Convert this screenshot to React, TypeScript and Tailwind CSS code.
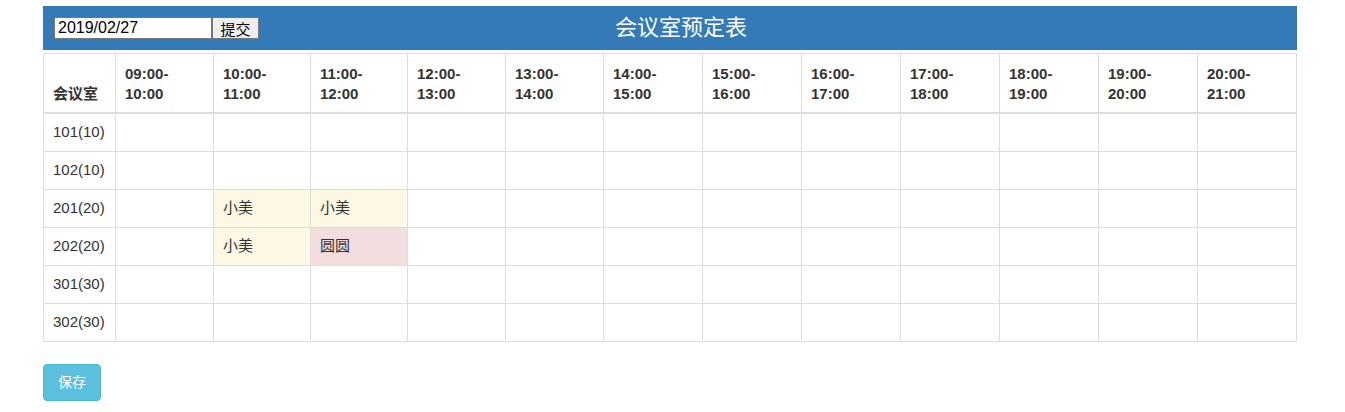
import React from 'react';

const hours = [
	'09:00-10:00',
	'10:00-11:00',
	'11:00-12:00',
	'12:00-13:00',
	'13:00-14:00',
	'14:00-15:00',
	'15:00-16:00',
	'16:00-17:00',
	'17:00-18:00',
	'18:00-19:00',
	'19:00-20:00',
	'20:00-21:00',
];

const colWidths = [
	'w-[98px]',
	'w-[97px]',
	'w-[97px]',
	'w-[98px]',
	'w-[98px]',
	'w-[99px]',
	'w-[99px]',
	'w-[99px]',
	'w-[99px]',
	'w-[99px]',
	'w-[99px]',
	'w-[99px]',
];

const rooms = ['101(10)', '102(10)', '201(20)', '202(20)', '301(30)', '302(30)'];

// room -> hour index -> booking
const bookings: Record<string, Record<number, { name: string; mine: boolean }>> = {
	'201(20)': { 1: { name: '小美', mine: true }, 2: { name: '小美', mine: true } },
	'202(20)': { 1: { name: '小美', mine: true }, 2: { name: '圆圆', mine: false } },
};

function App() {
	return (
		<div className="pt-[6px] pl-[43px] font-['Liberation_Sans','Noto_Sans_CJK_SC',sans-serif] text-[15px] leading-[20px] text-[#333]">
			<div className="w-[1254px]">
				<div className="grid grid-cols-[1fr_auto_1fr] items-center h-[44px] bg-[#337ab7]">
					<form className="flex pl-[11px]" onSubmit={(e) => e.preventDefault()}>
						<input
							defaultValue="2019/02/27"
							className="w-[158px] h-[22px] px-[3px] bg-white border border-[#767676] text-[16px] leading-[20px] text-black outline-none"
						/>
						<button className="w-[47px] h-[22px] pt-[3px] bg-[#efefef] border border-[#767676] text-[15px] text-black leading-none">
							提交
						</button>
					</form>
					<h3 className="ml-[22px] text-[22px] leading-[28px] text-white">会议室预定表</h3>
					<div />
				</div>
				<table className="mt-[3px] w-[1253px] table-fixed border-collapse border border-[#ddd]">
					<colgroup>
						<col className="w-[72px]" />
						{hours.map((h, i) => (
							<col key={h} className={colWidths[i]} />
						))}
					</colgroup>
					<thead>
						<tr>
							<th className="border border-[#ddd] border-b-2 px-[9px] pt-[10px] pb-2 text-left align-bottom font-bold">
								会议室
							</th>
							{hours.map((h) => {
								const [a, b] = h.split('-');
								return (
									<th
										key={h}
										className="border border-[#ddd] border-b-2 px-[9px] pt-[10px] pb-2 text-left align-bottom font-bold"
									>
										{a}-
										<br />
										{b}
									</th>
								);
							})}
						</tr>
					</thead>
					<tbody>
						{rooms.map((r) => (
							<tr key={r}>
								<td className="border border-[#ddd] px-[9px] py-2 h-[38px]">{r}</td>
								{hours.map((h, i) => {
									const b = bookings[r]?.[i];
									return (
										<td
											key={h}
											className={
												'border border-[#ddd] px-[9px] py-2 ' +
												(b ? (b.mine ? 'bg-[#fcf8e3]' : 'bg-[#f2dede]') : '')
											}
										>
											{b ? b.name : ''}
										</td>
									);
								})}
							</tr>
						))}
					</tbody>
				</table>
				<button className="mt-[22px] w-[58px] h-[37px] rounded-[4px] bg-[#5bc0de] border border-[#46b8da] text-white text-[14px]">
					保存
				</button>
			</div>
		</div>
	);
}

export default App;
